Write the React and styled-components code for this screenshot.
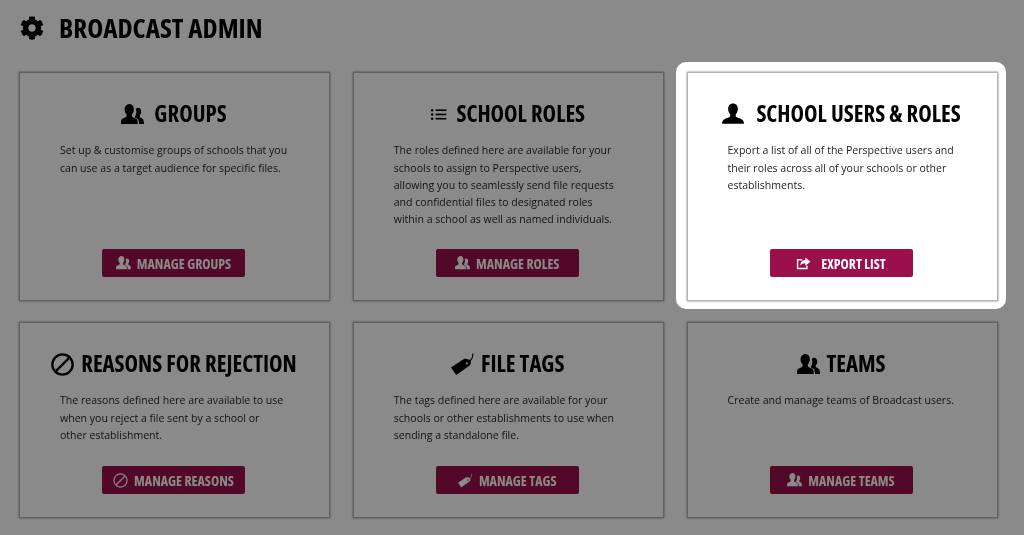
import React from "react";
import styled, { createGlobalStyle } from "styled-components";
import { FaCog } from "react-icons/fa";

const GlobalStyle = createGlobalStyle`
  html, body {
    margin: 0;
    height: 100%;
    overflow: hidden;
    background: #fff;
  }
`;

const Page = styled.div`
  position: relative;
  width: 1024px;
  height: 535px;
  overflow: hidden;
  background: #fff;
  font-family: "Open Sans", "Liberation Sans", sans-serif;
  color: #222;
  filter: blur(0.35px);
`;

const Overlay = styled.div`
  position: absolute;
  inset: 0;
  z-index: 1;
  background: rgba(0, 0, 0, 0.46);
`;

const PageHeader = styled.header`
  display: flex;
  align-items: center;
  height: 72px;
  padding: 0 0 17px 20px;
  box-sizing: border-box;
  gap: 15px;
  color: #000;
  font-size: 24px;
`;

const PageTitle = styled.h1`
  margin: 0;
  font-size: 27.1px;
  font-weight: 700;
  font-stretch: 75%;
  line-height: 1;
  color: #000;
`;

const Grid = styled.div`
  display: grid;
  grid-template-columns: repeat(3, 311px);
  grid-template-rows: 229px 196px;
  column-gap: 22.75px;
  row-gap: 21px;
  padding-left: 19px;
`;

const Card = styled.section`
  position: relative;
  z-index: ${(p) => (p.$active ? 2 : 0)};
  display: flex;
  flex-direction: column;
  align-items: center;
  box-sizing: border-box;
  padding: 29px 0 23px;
  background: #fff;
  border: 1px solid #b4b4b4;
  box-shadow: 0 0 2px rgba(0, 0, 0, 0.55);

  /* white halo round the highlighted card, sits under the card frame */
  &::before {
    content: "";
    display: ${(p) => (p.$active ? "block" : "none")};
    position: absolute;
    inset: -11px -9px -9px -12px;
    z-index: -2;
    border-radius: 10px;
    background: #fff;
  }
  &::after {
    content: "";
    display: ${(p) => (p.$active ? "block" : "none")};
    position: absolute;
    inset: -1px;
    z-index: -1;
    border: 1px solid #b4b4b4;
    box-shadow: 0 0 2px rgba(0, 0, 0, 0.55);
  }
`;

const CardTitle = styled.h2`
  display: flex;
  align-items: center;
  justify-content: center;
  gap: ${(p) => p.$gap}px;
  margin: -1px 1px 15px 0;
  height: 26px;
  font-size: 22.8px;
  font-weight: 700;
  font-stretch: 75%;
  line-height: 26px;
  color: #000;
  white-space: nowrap;
`;

const CardText = styled.p`
  align-self: flex-start;
  width: 228px;
  margin: 0.3px 0 0 40px;
  font-size: 10.55px;
  line-height: 17.3px;
  color: #1f1f1f;
`;

const Action = styled.button`
  display: flex;
  align-items: center;
  justify-content: center;
  gap: ${(p) => p.$gap}px;
  width: 143px;
  height: 28px;
  margin: auto 2px 0 0;
  padding: 0;
  border: 0;
  border-radius: 2px;
  background: #9b0f4c;
  color: #fff;
  font-family: inherit;
  font-size: 13.9px;
  font-weight: 700;
  font-stretch: 75%;
  white-space: nowrap;
`;

const UsersIcon = ({ size }) => (
  <svg width={size} height={(size * 21) / 24} viewBox="0 0 24 21" fill="currentColor">
    <path d="M9 0c2.600 0 4.400 2.200 4.400 5.400 0 2.200-.9 4.200-2.100 5.300v2.300c.4.900 5 1.900 5.700 3.600.3.800.4 3.400.4 4.400H0c0-1 .1-3.600.4-4.400.7-1.700 5-2.700 5.400-3.600v-2.300C4.600 9.600 3.700 7.600 3.700 5.400 3.700 2.200 6.400 0 9 0z" />
    <path d="M17.800 4c2 0 3.300 1.700 3.300 4 0 1.600-.6 3-1.500 3.800v1.700c.3.700 3.100 1.400 3.700 2.900.3.800.7 3.600.7 4.600h-5.200c-.1-1.700-.3-4-1-4.800-.9-1-2.500-1.800-3.400-2.400.2-.4.300-.8.400-1.300.7-1 1.200-2.500 1.200-4.100 0-1.100-.2-2.100-.5-2.900.5-.9 1.300-1.500 2.300-1.500z" />
  </svg>
);

const UserIcon = ({ size }) => (
  <svg width={size} height={size} viewBox="0 0 24 24" fill="currentColor">
    <path d="M12 .5c3.300 0 5.300 2.400 5.300 6 0 2.400-1 4.500-2.300 5.700v2.500c.5 1 6.500 2.200 8 4.300.7 1 .9 2.300 1 3.700H0c.1-1.400.3-2.700 1-3.700 1.500-2.100 7.500-3.300 8-4.300v-2.500c-1.300-1.200-2.300-3.300-2.300-5.700 0-3.600 2-6 5.300-6z" />
  </svg>
);

const BanIcon = ({ size, stroke }) => (
  <svg width={size} height={size} viewBox="0 0 24 24" fill="none" stroke="currentColor" strokeWidth={stroke}>
    <circle cx="12" cy="12" r="10.600" />
    <path d="M4.800 19.200L19.200 4.800" />
  </svg>
);

const ListIcon = ({ size }) => (
  <svg width={size} height={size} viewBox="0 0 24 24" fill="currentColor">
    <circle cx="3" cy="6" r="1.700" />
    <circle cx="3" cy="12" r="1.700" />
    <circle cx="3" cy="18" r="1.700" />
    <rect x="8" y="4.800" width="15" height="2.300" />
    <rect x="8" y="10.800" width="15" height="2.300" />
    <rect x="8" y="16.800" width="15" height="2.300" />
  </svg>
);

const TagIcon = ({ size }) => (
  <svg width={size} height={size} viewBox="0 0 24 24" fill="currentColor">
    <path
      fillRule="evenodd"
      d="M0 15.500L12.500 7.200c1-.6 2.200-.6 3.300-.3l3.400 1c.6 1.200.9 2.800.4 4.100-.3.900-.9 1.500-1.700 2.100L6 22.500c-.5.300-1 .2-1.300-.3L0 15.500zM15.800 10.200a1.100 1.100 0 1 0 .1 2.200 1.100 1.100 0 0 0-.1-2.200z"
    />
    <path d="M18.500 9c2.400-1.700 3.600-4.200 3.300-7.500" fill="none" stroke="currentColor" strokeWidth="1.100" />
  </svg>
);

const ExportIcon = ({ size }) => (
  <svg width={size} height={size} viewBox="0 0 24 24" fill="none" stroke="currentColor">
    <path d="M10 6H2.500v14h15v-5" strokeWidth="2.200" />
    <path d="M15 2.500l8 6.500-8 6.500v-4c-3.800 0-6.500 1-8 4 0-5.500 3-9 8-9z" fill="currentColor" stroke="none" />
  </svg>
);

const cards = [
  {
    title: "GROUPS",
    icon: <UsersIcon size={23} />,
    gap: 10,
    text: "Set up & customise groups of schools that you can use as a target audience for specific files.",
    action: "MANAGE GROUPS",
    actionIcon: <UsersIcon size={15} />,
    actionGap: 6,
  },
  {
    title: "SCHOOL ROLES",
    icon: <ListIcon size={17} />,
    gap: 9,
    text: "The roles defined here are available for your schools to assign to Perspective users, allowing you to seamlessly send file requests and confidential files to designated roles within a school as well as named individuals.",
    action: "MANAGE ROLES",
    actionIcon: <UsersIcon size={15} />,
    actionGap: 6,
  },
  {
    title: "SCHOOL USERS & ROLES",
    icon: <UserIcon size={22} />,
    gap: 12,
    active: true,
    text: "Export a list of all of the Perspective users and their roles across all of your schools or other establishments.",
    action: "EXPORT LIST",
    actionIcon: <ExportIcon size={15} />,
    actionGap: 10,
  },
  {
    title: "REASONS FOR REJECTION",
    icon: <BanIcon size={23} stroke={2.400} />,
    gap: 7,
    text: "The reasons defined here are available to use when you reject a file sent by a school or other establishment.",
    action: "MANAGE REASONS",
    actionIcon: <BanIcon size={15} stroke={1.800} />,
    actionGap: 6,
  },
  {
    title: "FILE TAGS",
    icon: <TagIcon size={24} />,
    gap: 6,
    text: "The tags defined here are available for your schools or other establishments to use when sending a standalone file.",
    action: "MANAGE TAGS",
    actionIcon: <TagIcon size={15} />,
    actionGap: 6,
  },
  {
    title: "TEAMS",
    icon: <UsersIcon size={23} />,
    gap: 6,
    text: "Create and manage teams of Broadcast users.",
    action: "MANAGE TEAMS",
    actionIcon: <UsersIcon size={15} />,
    actionGap: 6,
  },
];

export default function App() {
  return (
    <Page>
      <GlobalStyle />
      <PageHeader>
        <FaCog />
        <PageTitle>BROADCAST ADMIN</PageTitle>
      </PageHeader>
      <Grid>
        {cards.map((card) => (
          <Card key={card.title} $active={card.active}>
            <CardTitle $gap={card.gap}>
              {card.icon}
              {card.title}
            </CardTitle>
            <CardText>{card.text}</CardText>
            <Action $gap={card.actionGap}>
              {card.actionIcon}
              {card.action}
            </Action>
          </Card>
        ))}
      </Grid>
      <Overlay />
    </Page>
  );
}
